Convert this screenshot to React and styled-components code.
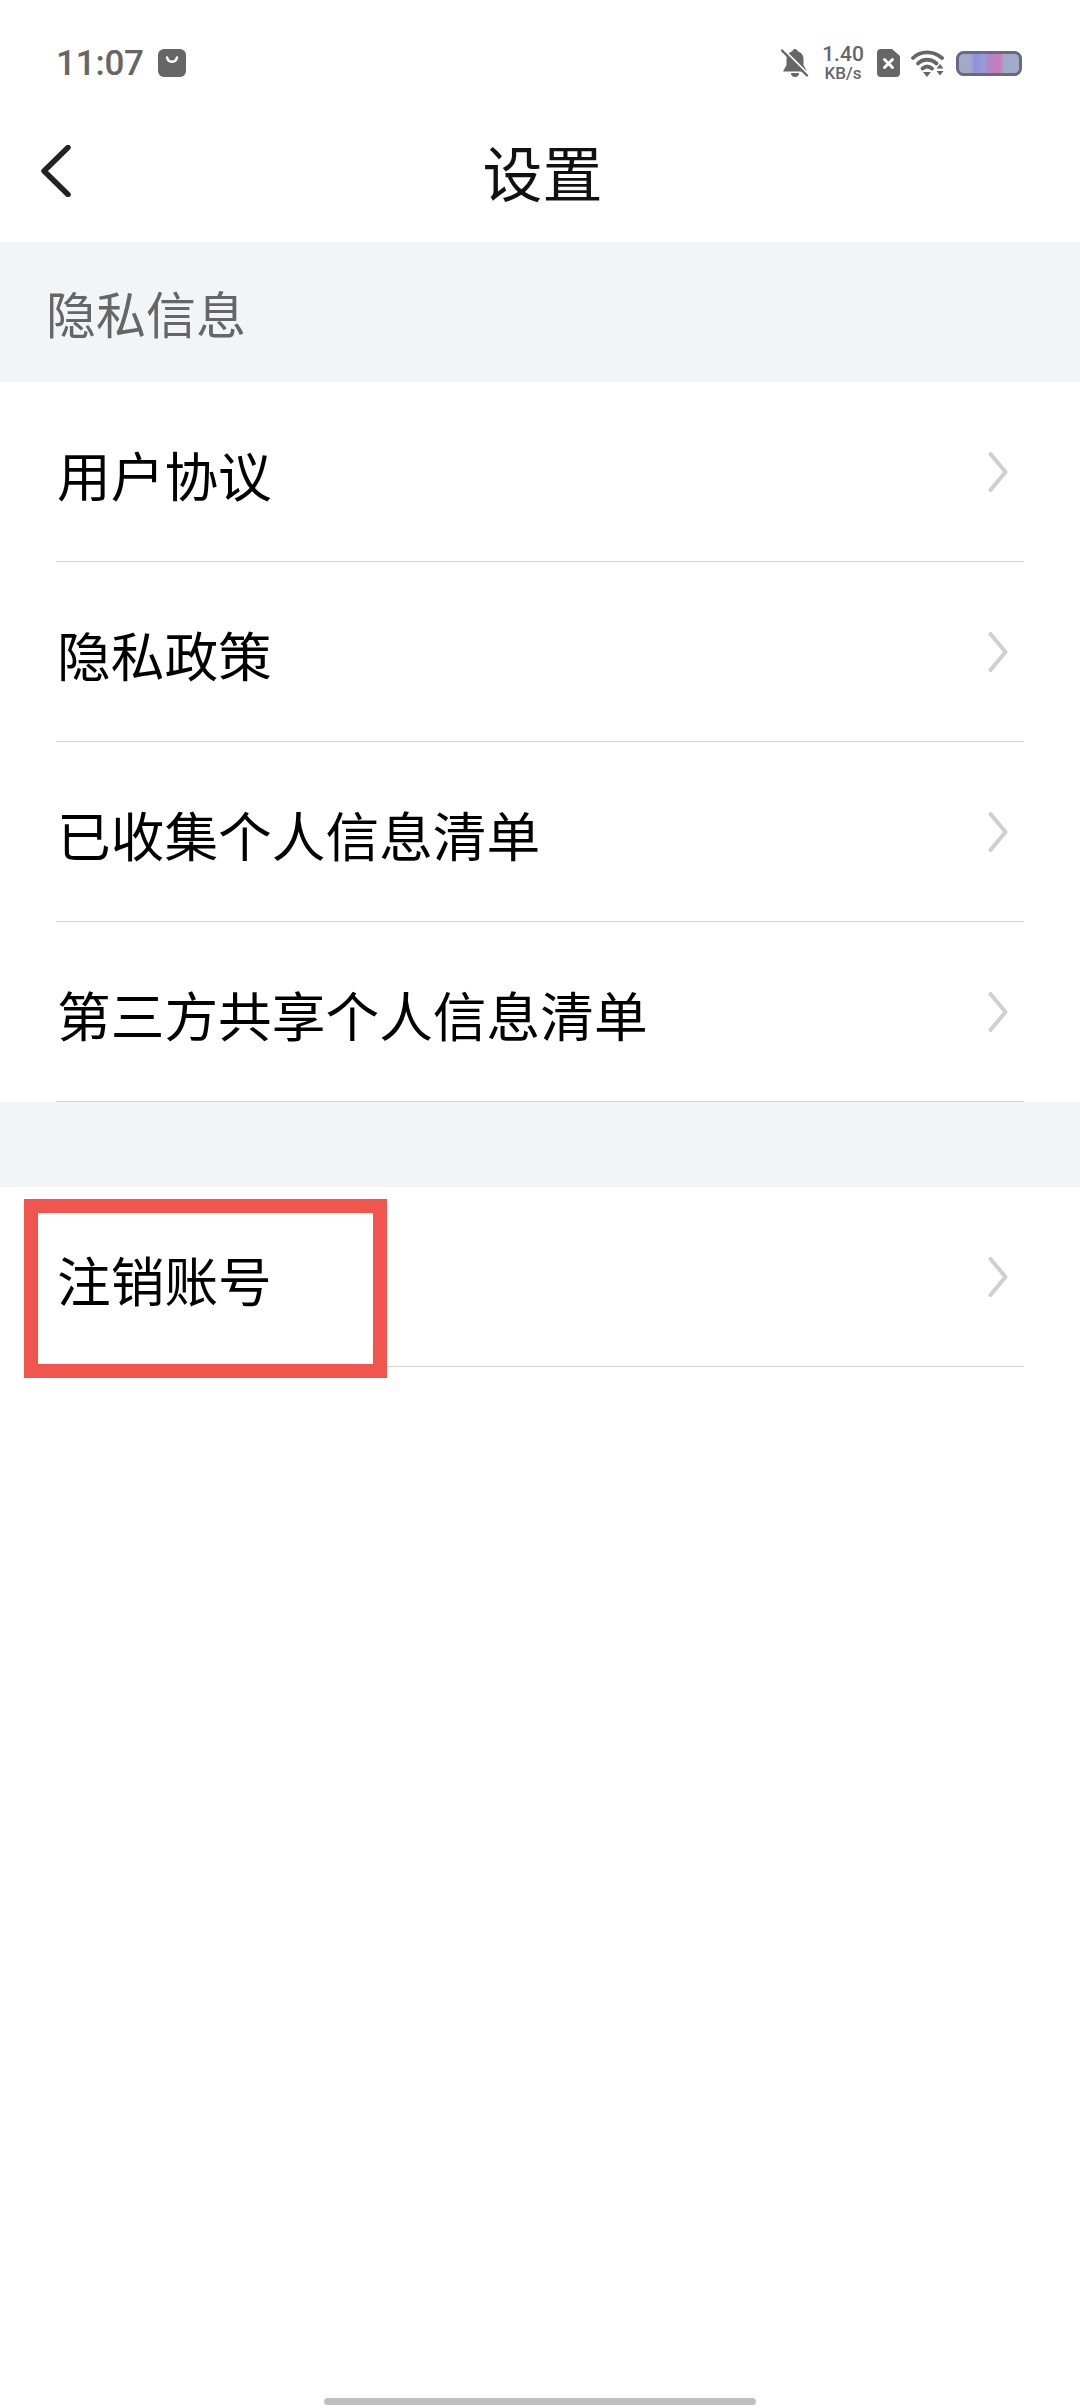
import React from "react";
import styled, { createGlobalStyle } from "styled-components";

const rows = ["用户协议", "隐私政策", "已收集个人信息清单", "第三方共享个人信息清单"];

const BagIcon = () => (
  <svg width="28" height="28" viewBox="0 0 28 28">
    <rect width="28" height="28" rx="6" fill="#666" />
    <path d="M9 8.500c.8 3 2.600 4.200 5 4.200s4.200-1.200 5-4.200" fill="none" stroke="#fff" strokeWidth="2.600" strokeLinecap="round" />
  </svg>
);

const BellOffIcon = () => (
  <svg width="28" height="30" viewBox="0 0 28 30">
    <path d="M14 1c-1.600 0-2.400 1-2.600 2.200C7.500 4.300 5.500 7.500 5.500 11v6L2 23.500h24L22.500 17v-6c0-3.500-2-6.700-5.900-7.800C16.400 2 15.600 1 14 1z" fill="#666" />
    <path d="M10 25a4 4 0 0 0 8 0z" fill="#666" />
    <path d="M2.500 1.500l25 25" stroke="#fff" strokeWidth="2" />
    <path d="M1 2.500l25 25" stroke="#666" strokeWidth="2.400" strokeLinecap="round" />
  </svg>
);

const SimIcon = () => (
  <svg width="23" height="28" viewBox="0 0 23 28">
    <path d="M4 0h11l8 7v17a4 4 0 0 1-4 4H4a4 4 0 0 1-4-4V4a4 4 0 0 1 4-4z" fill="#666" />
    <path d="M7.500 10.500l8 8M15.500 10.500l-8 8" stroke="#fff" strokeWidth="3" strokeLinecap="round" />
  </svg>
);

const WifiIcon = () => (
  <svg width="34" height="28" viewBox="0 0 34 28">
    <g fill="none" stroke="#666" strokeWidth="3.800" strokeLinecap="round">
      <path d="M2 9C9.500 1.500 22.500 1.500 31 9" />
      <path d="M7 14.500c5-5 13-5 18.500 0" />
      <path d="M11.500 19.500c3-2.600 6.500-2.600 9.500 0" />
    </g>
    <path d="M12 23h8l-4 5z" fill="#666" />
    <path d="M29 15l3.500 4.500h-7zM25.500 22h7L29 26.500z" fill="#666" />
  </svg>
);

const BatteryIcon = () => (
  <svg width="66" height="25" viewBox="0 0 66 25">
    <defs>
      <linearGradient id="batteryFill" x1="0" x2="1" y1="0" y2="0">
        <stop offset="0" stopColor="#a3aac8" />
        <stop offset="0.2" stopColor="#a3aac8" />
        <stop offset="0.28" stopColor="#8f92dc" />
        <stop offset="0.42" stopColor="#9a9ad6" />
        <stop offset="0.5" stopColor="#b483c4" />
        <stop offset="0.68" stopColor="#c67fb8" />
        <stop offset="0.74" stopColor="#a3aac8" />
        <stop offset="1" stopColor="#a3aac8" />
      </linearGradient>
    </defs>
    <rect x="1.500" y="1.500" width="63" height="22" rx="6" fill="url(#batteryFill)" stroke="#666a85" strokeWidth="3" />
  </svg>
);

const BackIcon = () => (
  <svg width="30" height="52" viewBox="0 0 30 52">
    <path d="M27 2.500L3 26l24 23.500" fill="none" stroke="#222" strokeWidth="5.500" strokeLinecap="round" strokeLinejoin="round" />
  </svg>
);

const ChevronIcon = () => (
  <svg width="20" height="40" viewBox="0 0 20 40">
    <path d="M2.500 2l15 18-15 18" fill="none" stroke="#cfcfcf" strokeWidth="4" strokeLinecap="round" strokeLinejoin="round" />
  </svg>
);

const App = () => {
  return (
    <Page>
      <GlobalStyle />
      <StatusBar>
        <StatusLeft>
          <Time>11:07</Time>
          <BagIcon />
        </StatusLeft>
        <StatusRight>
          <BellOffIcon />
          <Speed>
            <SpeedValue>1.40</SpeedValue>
            <SpeedUnit>KB/s</SpeedUnit>
          </Speed>
          <SimIcon />
          <WifiIcon />
          <BatteryIcon />
        </StatusRight>
      </StatusBar>

      <NavBar>
        <BackButton>
          <BackIcon />
        </BackButton>
        <NavTitle>设置</NavTitle>
      </NavBar>

      <SectionHeader>隐私信息</SectionHeader>
      {rows.map((row) => (
        <Row key={row}>
          <RowText>{row}</RowText>
          <ChevronIcon />
        </Row>
      ))}

      <Spacer />
      <Row>
        <RowText>注销账号</RowText>
        <ChevronIcon />
        <Highlight />
      </Row>

      <HomeBar />
    </Page>
  );
};

export default App;

const GlobalStyle = createGlobalStyle`
  html, body {
    margin: 0;
    padding: 0;
    background: #fff;
  }
  body {
    font-family: "Noto Sans CJK SC", "Noto Sans", sans-serif;
  }
`;

const Page = styled.div`
  display: flex;
  flex-direction: column;
  width: 1080px;
  height: 2408px;
  background: #fff;
  overflow: hidden;
`;

const StatusBar = styled.div`
  display: flex;
  align-items: center;
  justify-content: space-between;
  height: 126px;
  padding: 0 58px 0 56px;
  box-sizing: border-box;
`;

const StatusLeft = styled.div`
  display: flex;
  align-items: center;
  gap: 14px;
`;

const Time = styled.span`
  font-family: Roboto, sans-serif;
  font-size: 35px;
  font-weight: 500;
  letter-spacing: -0.2px;
  color: #666;
`;

const StatusRight = styled.div`
  display: flex;
  align-items: center;
  gap: 11px;
`;

const Speed = styled.div`
  display: flex;
  flex-direction: column;
  align-items: center;
  width: 46px;
  font-family: Roboto, sans-serif;
  font-weight: 500;
  color: #666;
`;

const SpeedValue = styled.span`
  font-size: 21px;
  line-height: 21px;
`;

const SpeedUnit = styled.span`
  font-size: 17px;
  line-height: 17px;
`;

const NavBar = styled.div`
  position: relative;
  display: flex;
  align-items: center;
  justify-content: center;
  height: 116px;
  padding: 0 0 26px 5px;
  box-sizing: border-box;
`;

const BackButton = styled.div`
  position: absolute;
  left: 41px;
  top: 19px;
  display: flex;
`;

const NavTitle = styled.h1`
  margin: 0;
  font-size: 60px;
  font-weight: 400;
  line-height: 1;
  color: #111;
`;

const SectionHeader = styled.div`
  display: flex;
  align-items: center;
  height: 140px;
  padding-left: 46px;
  background: #f3f4f5;
  font-size: 50px;
  color: #666;
`;

const Row = styled.div`
  position: relative;
  display: flex;
  align-items: center;
  justify-content: space-between;
  height: 180px;
  margin: 0 56px;
  padding: 0 16px 0 1px;
  box-sizing: border-box;
  border-bottom: 1.500px solid #d4d4d4;
`;

const RowText = styled.span`
  font-size: 53.700px;
  color: #000;
  padding-top: 3px;
`;

const Spacer = styled.div`
  height: 85px;
  background: #f3f4f5;
`;

const Highlight = styled.div`
  position: absolute;
  left: -32px;
  top: 12px;
  width: 363px;
  height: 179px;
  box-sizing: border-box;
  border: 14px solid #f0554e;
`;

const HomeBar = styled.div`
  align-self: center;
  width: 432px;
  height: 7px;
  margin-top: auto;
  margin-bottom: 3px;
  border-radius: 4px;
  background: #bfbfbf;
`;
